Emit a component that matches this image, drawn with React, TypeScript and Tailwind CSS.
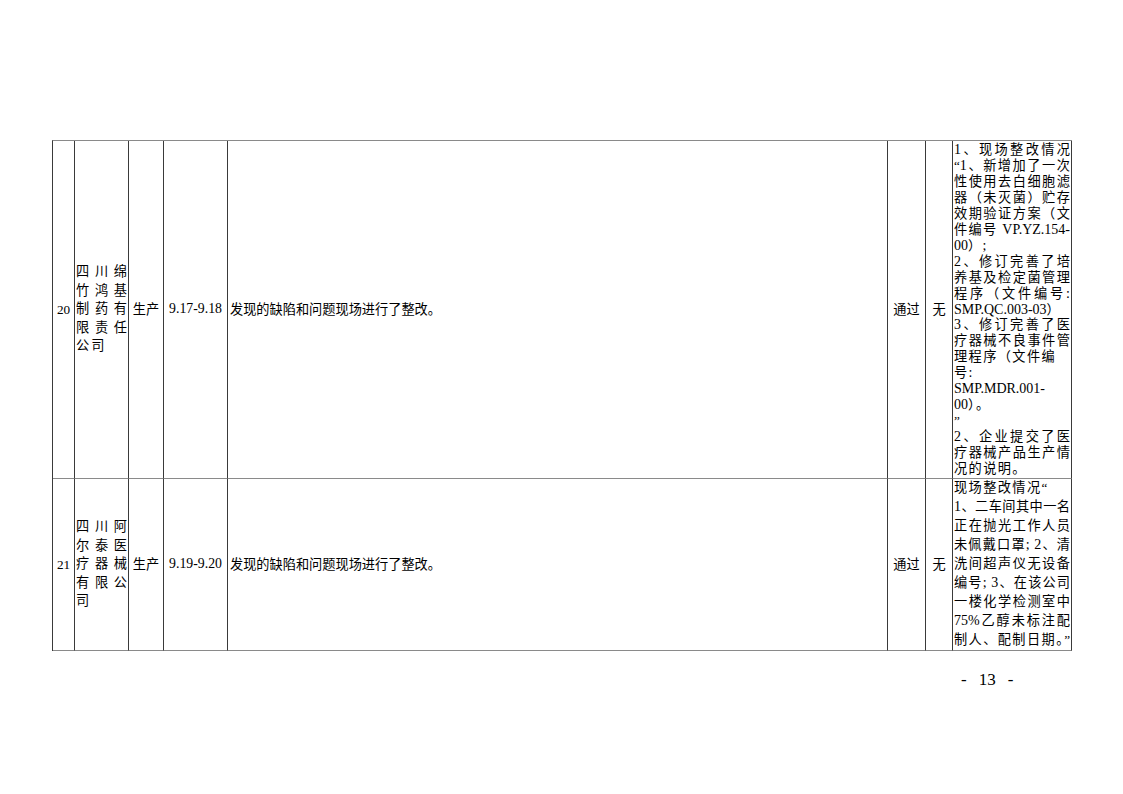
import React from "react";

function Runs({ text, track }: { text: string; track: boolean }) {
  const parts = text.split(/([\x00-\x7F]+)/).filter((p) => p.length > 0);
  return (
    <>
      {parts.map((p, i) =>
        /^[\x00-\x7F]+$/.test(p) ? (
          <span key={i} className="text-[14px]">
            {p}
          </span>
        ) : (
          <span key={i} className={track ? "tracking-[1.4px]" : ""}>
            {p}
          </span>
        )
      )}
    </>
  );
}

const cell =
  "border-r border-b border-r-[#3a3a3a] border-b-[#8a8a8a] flex items-center";

function Company({ lines }: { lines: string[] }) {
  return (
    <div className={`${cell} px-[1px]`}>
      <div className="w-full leading-[18.6px]">
        {lines.map((l, i) => (
          <div
            key={i}
            className={
              i < lines.length - 1
                ? "text-justify [text-align-last:justify]"
                : "text-left tracking-[2px]"
            }
          >
            {l}
          </div>
        ))}
      </div>
    </div>
  );
}

type Line = { t: string; full?: boolean };

function Notes({ lines, lh }: { lines: Line[]; lh: string }) {
  return (
    <div className={`${cell} pl-[1px] pr-[1px]`}>
      <div className={`w-full whitespace-pre-wrap ${lh}`}>
        {lines.map((l, i) => (
          <div
            key={i}
            className={
              l.full
                ? "text-justify [text-align-last:justify] whitespace-nowrap"
                : "text-left whitespace-nowrap"
            }
          >
            <Runs text={l.t} track={!l.full} />
          </div>
        ))}
      </div>
    </div>
  );
}

const notes1: Line[] = [
  { t: "1、现场整改情况", full: true },
  { t: "“1、新增加了一次", full: true },
  { t: "性使用去白细胞滤", full: true },
  { t: "器（未灭菌）贮存", full: true },
  { t: "效期验证方案（文", full: true },
  { t: "件编号 VP.YZ.154-", full: true },
  { t: "00）;" },
  { t: "2、修订完善了培", full: true },
  { t: "养基及检定菌管理", full: true },
  { t: "程序（文件编号:", full: true },
  { t: "SMP.QC.003-03）" },
  { t: "3、修订完善了医", full: true },
  { t: "疗器械不良事件管", full: true },
  { t: "理程序（文件编" },
  { t: "号:" },
  { t: "SMP.MDR.001-" },
  { t: "00）。" },
  { t: "”" },
  { t: "2、企业提交了医", full: true },
  { t: "疗器械产品生产情", full: true },
  { t: "况的说明。" },
];

const notes2: Line[] = [
  { t: "现场整改情况“" },
  { t: "1、二车间其中一名", full: true },
  { t: "正在抛光工作人员", full: true },
  { t: "未佩戴口罩; 2、清", full: true },
  { t: "洗间超声仪无设备", full: true },
  { t: "编号; 3、在该公司", full: true },
  { t: "一楼化学检测室中", full: true },
  { t: "75%乙醇未标注配", full: true },
  { t: "制人、配制日期。”", full: true },
];

export default function App() {
  return (
    <div className="w-[1123px] h-[794px] bg-white text-black font-['Liberation_Serif','Noto_Sans_CJK_SC',serif] text-[13.2px] pt-[140px] pl-[52px] overflow-hidden">
      <div className="w-[1020px] grid grid-cols-[22px_54px_35px_64px_660px_38px_27px_119px] grid-rows-[338px_172px] border-l border-t border-l-[#3a3a3a] border-t-[#8a8a8a]">
        {/* Row 20 */}
        <div className={`${cell} justify-center`}>20</div>
        <Company lines={["四川绵", "竹鸿基", "制药有", "限责任", "公司"]} />
        <div className={`${cell} justify-center`}>生产</div>
        <div className={`${cell} justify-center text-[13.8px]`}>9.17-9.18</div>
        <div className={`${cell} pl-[2px]`}>发现的缺陷和问题现场进行了整改。</div>
        <div className={`${cell} justify-center`}>通过</div>
        <div className={`${cell} justify-center`}>无</div>
        <Notes lines={notes1} lh="leading-[15.9px]" />

        {/* Row 21 */}
        <div className={`${cell} justify-center`}>21</div>
        <Company lines={["四川阿", "尔泰医", "疗器械", "有限公", "司"]} />
        <div className={`${cell} justify-center`}>生产</div>
        <div className={`${cell} justify-center text-[13.8px]`}>9.19-9.20</div>
        <div className={`${cell} pl-[2px]`}>发现的缺陷和问题现场进行了整改。</div>
        <div className={`${cell} justify-center`}>通过</div>
        <div className={`${cell} justify-center`}>无</div>
        <Notes lines={notes2} lh="leading-[18.9px]" />
      </div>

      <div className="mt-[20px] pl-[909px] flex items-center gap-[12px] text-[17px] leading-[18px] font-['Liberation_Serif',serif]">
        <span>-</span>
        <span>13</span>
        <span>-</span>
      </div>
    </div>
  );
}
